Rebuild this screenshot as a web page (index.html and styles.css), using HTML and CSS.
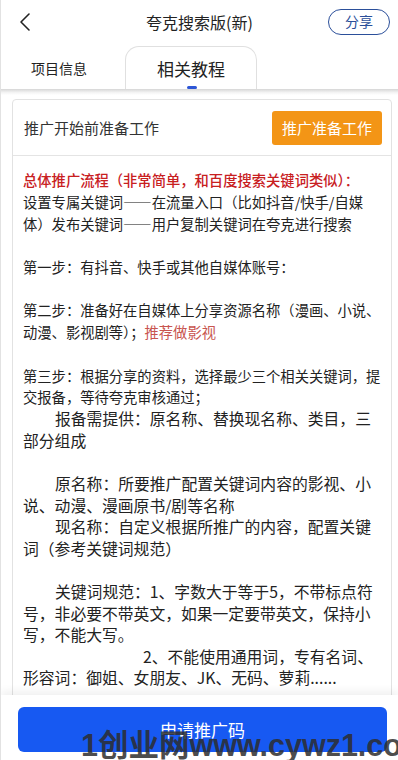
FILE: index.html
```html
<!DOCTYPE html>
<html lang="zh">
<head>
<meta charset="utf-8">
<link rel="stylesheet" href="styles.css">
</head>
<body>
<div class="page">
  <header class="topbar">
    <svg class="back" width="12" height="20" viewBox="0 0 12 20"><path d="M10 2 L2 10 L10 18" fill="none" stroke="#222" stroke-width="1.6" stroke-linecap="round" stroke-linejoin="round"/></svg>
    <div class="title">夸克搜索版(新)</div>
    <div class="share">分享</div>
  </header>
  <nav class="tabs">
    <div class="tab">项目信息</div>
    <div class="tab active">相关教程<span class="indicator"></span></div>
  </nav>
  <div class="strip"></div>
  <main class="main">
    <section class="card">
      <div class="card-head">
        <div class="card-title">推广开始前准备工作</div>
        <div class="prep-btn">推广准备工作</div>
      </div>
      <div class="card-body">
        <div class="s"><span class="red">总体推广流程（非常简单，和百度搜索关键词类似）：</span><br>设置专属关键词——在流量入口（比如抖音/快手/自媒<br>体）发布关键词——用户复制关键词在夸克进行搜索</div>
        <div class="blank"></div>
        <div class="s">第一步：有抖音、快手或其他自媒体账号：</div>
        <div class="blank"></div>
        <div class="s">第二步：准备好在自媒体上分享资源名称（漫画、小说、<br>动漫、影视剧等）；<span class="pink">推荐做影视</span></div>
        <div class="blank"></div>
        <div class="s">第三步：根据分享的资料，选择最少三个相关关键词，提<br>交报备，等待夸克审核通过；</div>
        <div class="l ind">报备需提供：原名称、替换现名称、类目，三<br>部分组成</div>
        <div class="blank"></div>
        <div class="l ind">原名称：所要推广配置关键词内容的影视、小<br>说、动漫、漫画原书/剧等名称</div>
        <div class="l ind">现名称：自定义根据所推广的内容，配置关键<br>词（参考关键词规范）</div>
        <div class="blank"></div>
        <div class="l ind">关键词规范：1、字数大于等于5，不带标点符<br>号，非必要不带英文，如果一定要带英文，保持小<br>写，不能大写。</div>
        <div class="l ind2">2、不能使用通用词，专有名词、<br>形容词：御姐、女朋友、JK、无码、萝莉......</div>
      </div>
    </section>
  </main>
  <footer class="bottombar">
    <div class="apply-btn">申请推广码</div>
  </footer>
  <div class="watermark">1创业网www.cywz1.com</div>
</div>
</body>
</html>
```

FILE: styles.css
```css
* { box-sizing: border-box; }
html, body { margin: 0; padding: 0; }
body {
  font-family: "Noto Sans CJK SC", "Noto Sans", sans-serif;
  color: #222;
  background: #fff;
}
.page {
  width: 398px;
  height: 760px;
  display: flex;
  flex-direction: column;
  overflow: hidden;
  position: relative;
  border-left: 1px solid #e2e2e2;
}
.topbar {
  height: 44px;
  display: flex;
  align-items: center;
  padding: 0 8px 0 18px;
  position: relative;
}
.back { flex: none; }
.title {
  position: absolute;
  left: 0; right: 0;
  text-align: center;
  font-size: 16px;
  color: #222;
  pointer-events: none;
  top: 11px;
  line-height: 22px;
}
.share {
  margin-left: auto;
  width: 62px;
  height: 26px;
  border: 1.3px solid #2b4f9a;
  border-radius: 13px;
  color: #2b4f9a;
  font-size: 14px;
  line-height: 23px;
  text-align: center;
  margin-top: -1px;
}
.tabs {
  height: 45px;
  display: flex;
  align-items: flex-end;
}
.tab {
  font-size: 14px;
  color: #222;
  height: 43px;
  line-height: 44px;
}
.tab:first-child { width: 124px; text-align: left; padding-left: 30px; }
.tab.active {
  width: 132px;
  text-align: center;
  font-size: 17px;
  line-height: 44px;
  border: 1px solid #e0e0e0;
  border-bottom: none;
  border-radius: 14px 14px 0 0;
  position: relative;
  background: #fff;
}
.indicator {
  position: absolute;
  left: 61px;
  bottom: 0;
  width: 10px;
  height: 3px;
  border-radius: 2px;
  background: #2d56d6;
}
.strip {
  height: 6px;
  background: linear-gradient(#d6d6d6, #f4f4f4 60%, #fff);
}
.main {
  flex: 1;
  overflow: hidden;
  padding: 4px 6px 0 11px;
}
.card {
  border: 1px solid #e2e2e2;
  border-radius: 4px;
  background: #fff;
}
.card-head {
  height: 56px;
  display: flex;
  align-items: center;
  justify-content: space-between;
  padding: 0 9px 0 11px;
  border-bottom: 1px solid #e4e4e4;
}
.card-title {
  font-size: 15px;
  color: #333;
}
.prep-btn {
  background: #f39516;
  color: #fff;
  font-size: 15px;
  width: 110px;
  height: 34px;
  line-height: 34px;
  text-align: center;
  border-radius: 3px;
}
.card-body {
  padding: 13px 8px 20px 10px;
  line-height: 21.8px;
  white-space: nowrap;
}
.s { font-size: 14.3px; }
.l { font-size: 15.8px; line-height: 21.6px; }
.blank { height: 21.6px; }
.ind { text-indent: 32px; }
.ind2 { text-indent: 120px; }
.red { color: #c8201f; font-weight: 500; }
.pink { color: #c8554f; }
.bottombar {
  height: 65px;
  flex: none;
  background: #fff;
  box-shadow: 0 -4px 8px rgba(0,0,0,0.06);
  padding: 12px 11px 8px 17px;
}
.apply-btn {
  height: 45px;
  background: #1759f2;
  border-radius: 6px;
  color: #fff;
  font-size: 17px;
  line-height: 45px;
  text-align: center;
}
.watermark {
  position: absolute;
  left: 80px;
  top: 727px;
  font-family: "Liberation Sans", "Noto Sans CJK SC", sans-serif;
  font-weight: bold;
  font-size: 30.5px;
  line-height: 36px;
  color: rgba(45, 45, 45, 0.85);
  white-space: nowrap;
}
```
